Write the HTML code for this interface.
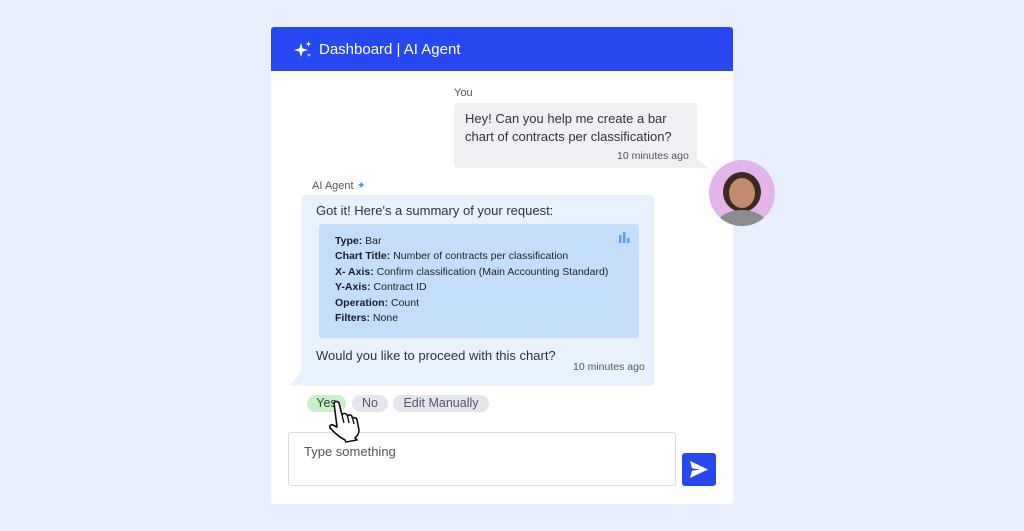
<!DOCTYPE html><html><head><style>
body{margin:0;width:1024px;height:531px;background:#e9effd;font-family:"Liberation Sans",sans-serif;position:relative;overflow:hidden}
.a{position:absolute}
.card{left:271px;top:27px;width:462px;height:477px;background:#fff;border-radius:3px}
.hd{left:271px;top:27px;width:462px;height:44px;background:#2747f0;border-radius:3px 3px 0 0;color:#fff;font-size:15px}
.t{color:#333;font-size:13px}
.pill{top:395px;height:17px;border-radius:9px;font-size:12.5px;line-height:17px;text-align:center;color:#556}
.box{font-size:10.5px;line-height:15.4px;color:#222}
.box b{color:#1a1a2a}
</style></head><body>
<div class="a card"></div>
<div class="a hd"><svg class="a" style="left:22px;top:13px" width="20" height="19" viewBox="0 0 20 19"><path d="M8 3 L9.6 8.4 L15 10 L9.6 11.6 L8 17 L6.4 11.6 L1 10 L6.4 8.4Z" fill="#fff"/><path d="M15.5 1 L16.2 3.3 L18.5 4 L16.2 4.7 L15.5 7 L14.8 4.7 L12.5 4 L14.8 3.3Z" fill="#fff"/><path d="M16 13 L16.5 14.5 L18 15 L16.5 15.5 L16 17 L15.5 15.5 L14 15 L15.5 14.5Z" fill="#fff"/></svg><span class="a" style="left:48px;top:14px">Dashboard | AI Agent</span></div>
<div class="a" style="left:454px;top:87px;font-size:11px;color:#555">You</div>
<div class="a" style="left:454px;top:103px;width:243px;height:65px;background:#eef0f4;border-radius:4px"></div>
<svg class="a" style="left:690px;top:152px" width="20" height="17"><path d="M0 0 L18 16 L0 16Z" fill="#eef0f4"/></svg>
<div class="a t" style="left:465px;top:110px;line-height:18px">Hey! Can you help me create a bar<br>chart of contracts per classification?</div>
<div class="a" style="left:617px;top:150px;font-size:10.5px;color:#555">10 minutes ago</div>
<div class="a" style="left:709px;top:160px;width:66px;height:66px;border-radius:50%;background:#e4b5ec;overflow:hidden"><div class="a" style="left:14px;top:12px;width:38px;height:40px;border-radius:50%;background:#3a2a22"></div><div class="a" style="left:20px;top:18px;width:26px;height:30px;border-radius:50%;background:#c28a6e"></div><div class="a" style="left:8px;top:50px;width:50px;height:30px;border-radius:50%;background:#8a8c90"></div></div>
<div class="a" style="left:312px;top:179px;font-size:11px;color:#555">AI Agent <span style="color:#4a9af0">✦</span></div>
<div class="a" style="left:301px;top:195px;width:353px;height:191px;background:#e8f2fe;border-radius:4px"></div>
<svg class="a" style="left:289px;top:372px" width="14" height="15"><path d="M12 0 L12 14 L0 14Z" fill="#e8f2fe"/></svg>
<div class="a t" style="left:316px;top:203px;font-size:13px">Got it! Here's a summary of your request:</div>
<div class="a" style="left:319px;top:224px;width:320px;height:114px;background:#c3ddfb;border-radius:3px"></div>
<svg class="a" style="left:619px;top:232px" width="12" height="11"><rect x="0" y="3" width="2.5" height="8" fill="#5aa0f0"/><rect x="4" y="0" width="2.5" height="11" fill="#5aa0f0"/><rect x="8" y="6" width="2.5" height="5" fill="#5aa0f0"/></svg>
<div class="a box" style="left:335px;top:234px"><b>Type:</b> Bar<br><b>Chart Title:</b> Number of contracts per classification<br><b>X- Axis:</b> Confirm classification (Main Accounting Standard)<br><b>Y-Axis:</b> Contract ID<br><b>Operation:</b> Count<br><b>Filters:</b> None</div>
<div class="a t" style="left:316px;top:348px">Would you like to proceed with this chart?</div>
<div class="a" style="left:573px;top:361px;font-size:10.5px;color:#555">10 minutes ago</div>
<div class="a pill" style="left:307px;width:39px;background:#c9efc9;color:#2a4a2a">Yes</div>
<div class="a pill" style="left:352px;width:36px;background:#e4e6ee">No</div>
<div class="a pill" style="left:393px;width:96px;background:#e4e6ee">Edit Manually</div>
<div class="a" style="left:288px;top:432px;width:386px;height:52px;border:1px solid #d8dbe2;border-radius:3px;background:#fff"></div>
<div class="a" style="left:304px;top:444px;font-size:13px;color:#555">Type something</div>
<svg class="a" style="left:329px;top:400px" width="36" height="44" viewBox="0 0 36 44"><path d="M5 3 C6 1 9 1 10 3 L13 15 C14 13 17 13 18 15 L18.5 16 C20 14 23 15 23 17 L23.5 18 C25 17 28 18 28 20 L30 30 C30 34 28 36 26 38 L28 40 L17 42 L16 40 C12 38 8 35 4 31 L1 28 C0 26 2 24 4 25 L8 27 Z" fill="#fff" stroke="#111" stroke-width="1.6" stroke-linejoin="round"/><path d="M13 15 L15 23 M18.5 16 L20 23 M23.5 18 L25 24" stroke="#111" stroke-width="1.4" fill="none"/></svg>
<div class="a" style="left:682px;top:453px;width:34px;height:33px;background:#2747f0;border-radius:3px"><svg class="a" style="left:8px;top:8px" width="18" height="17" viewBox="0 0 18 17"><path d="M0 0 L18 8.5 L0 17 L2 9.8 L10 8.5 L2 7.2Z" fill="#fff"/></svg></div>
</body></html>
